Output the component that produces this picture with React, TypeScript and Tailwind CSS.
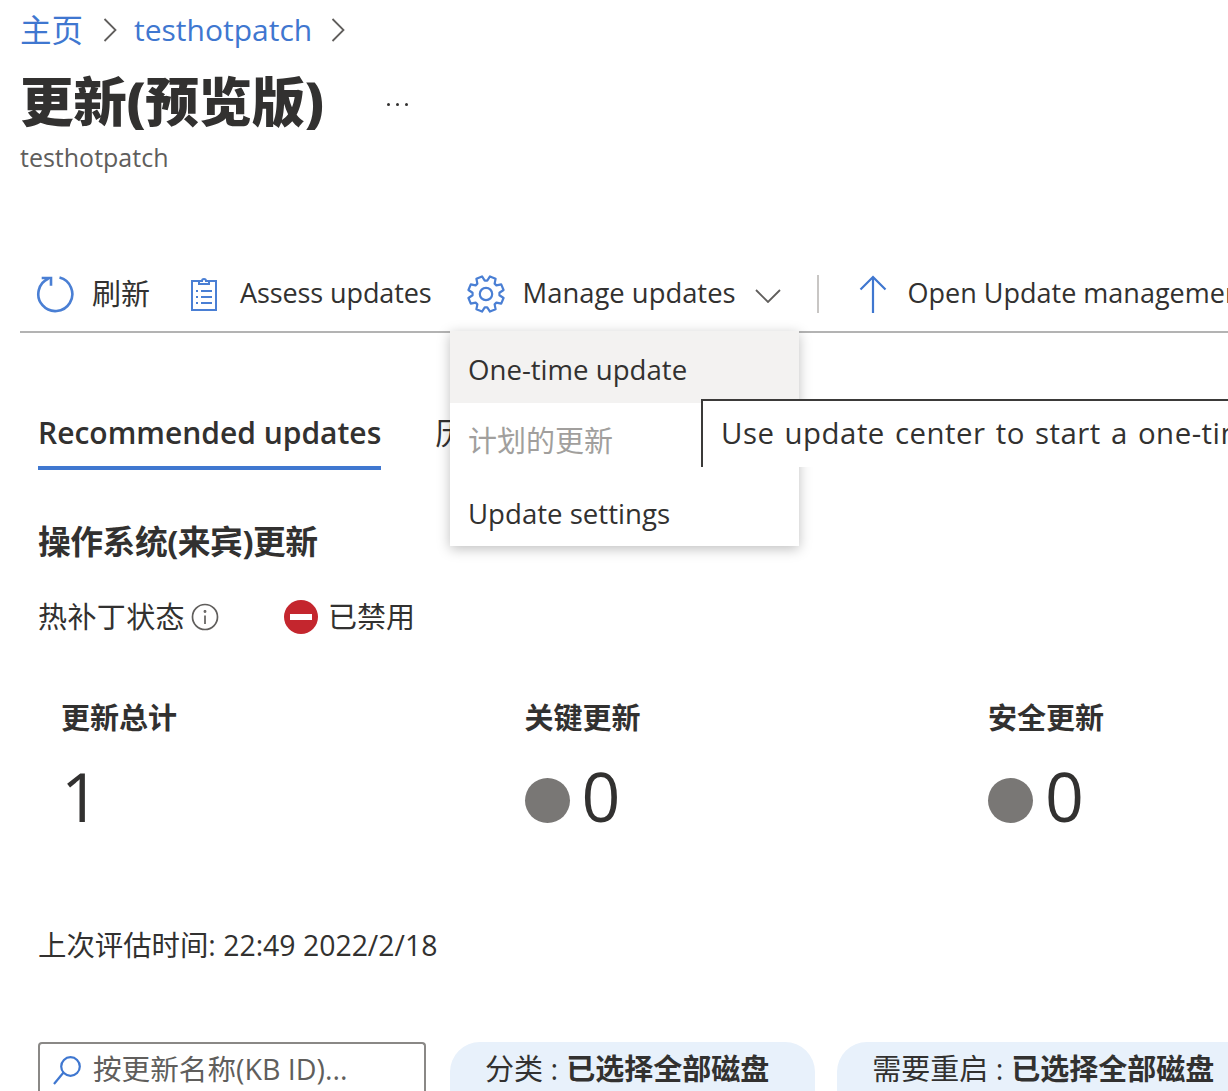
import { Info } from "lucide-react";

const FONT = "[font-family:'Open_Sans','Noto_Sans_CJK_SC',sans-serif]";

// 8 tooth gear outline, teeth sit off the vertical axis like the portal icon
function gearPath(cx: number, cy: number, outer: number, inner: number) {
  const pts: string[] = [];
  for (let i = 0; i < 8; i++) {
    const a = ((i * 45 + 22.5 - 90) * Math.PI) / 180;
    const steps: [number, number][] = [
      [inner, -0.3],
      [outer, -0.17],
      [outer, 0.17],
      [inner, 0.3],
    ];
    for (const [r, d] of steps) {
      pts.push(`${(cx + r * Math.cos(a + d)).toFixed(2)} ${(cy + r * Math.sin(a + d)).toFixed(2)}`);
    }
  }
  return `M${pts.join("L")}Z`;
}

function Chevron({ className }: { className: string }) {
  return (
    <svg viewBox="0 0 14 26" className={className} fill="none" stroke="#605e5c" strokeWidth="1.8">
      <path d="M1.5 2L12.5 13L1.5 24" />
    </svg>
  );
}

function Stat({ title, value, dot }: { title: string; value: string; dot?: boolean }) {
  return (
    <div className="w-[463.5px] shrink-0">
      <div className="text-[29px] leading-[38px] font-bold text-[#323130]">{title}</div>
      <div className="mt-[23px] flex items-center h-[72px]">
        {dot && <span className="w-[45px] h-[45px] rounded-full bg-[#797775] mr-[12px] mt-[8px]" />}
        <span className="text-[68px] leading-[72px] text-[#323130]">{value}</span>
      </div>
    </div>
  );
}

function Pill({ label, value }: { label: string; value: string }) {
  return (
    <div className="shrink-0 h-[60px] rounded-t-[30px] bg-[#e8f1fb] pl-[35px] pr-[46px] flex items-start pt-[8px] text-[29px] leading-[38px] text-[#323130] whitespace-nowrap">
      <span>{label} : </span>
      <span className="font-bold ml-[8px]">{value}</span>
    </div>
  );
}

export default function App() {
  return (
    <div className={`${FONT} relative w-[1228px] h-[1091px] overflow-hidden bg-white text-[#323130]`}>
      {/* header */}
      <div className="pl-[20px] pt-[9px]">
        <div className="flex items-center h-[42px] text-[30px] leading-[42px] text-[#3f77d0]">
          <span className="text-[31.5px]">主页</span>
          <Chevron className="w-[14px] h-[26px] ml-[20px] mr-[17px]" />
          <span>testhotpatch</span>
          <Chevron className="w-[14px] h-[26px] ml-[19px]" />
        </div>
        <div className="flex items-center mt-[16px] h-[70px]">
          <h1 className="text-[53.6px] leading-[70px] font-black text-[#323130] tracking-[-0.4px]">更新(预览版)</h1>
          <span className="ml-[63px] flex gap-[6px] mt-[4px]">
            <i className="w-[3px] h-[3px] rounded-full bg-[#323130]" />
            <i className="w-[3px] h-[3px] rounded-full bg-[#323130]" />
            <i className="w-[3px] h-[3px] rounded-full bg-[#323130]" />
          </span>
        </div>
        <div className="text-[25px] leading-[34px] text-[#605e5c] mt-[3px]">testhotpatch</div>
      </div>

      {/* toolbar */}
      <div className="ml-[20px] mt-[89px] h-[70px] border-b-2 border-[#b3b3b3] flex items-center pb-[7px] text-[27px] whitespace-nowrap text-[#323130]">
        <svg viewBox="0 0 40 40" className="w-[40px] h-[40px] ml-[15px] shrink-0" fill="none" stroke="#4a7fd4" strokeWidth="2.6">
          <path d="M24.5 3.6A17 17 0 1 1 13.5 4.5" />
          <path d="M6.7 4H16V11.7" />
        </svg>
        <span className="ml-[17px] text-[29px]">刷新</span>
        <svg viewBox="0 0 28 36" className="w-[28px] h-[36px] ml-[40px] shrink-0" fill="none" stroke="#4a7fd4" strokeWidth="2">
          <path d="M9 5H2v29h24V5h-7" />
          <path d="M9 8V5h3a2 2 0 0 1 4 0h3v3z" />
          <path d="M6 15h2M11 15h11M6 21h2M11 21h11M6 27h2M11 27h11" />
        </svg>
        <span className="ml-[22px] tracking-[-0.1px]">Assess updates</span>
        <svg viewBox="0 0 40 40" className="w-[40px] h-[40px] ml-[34px] shrink-0" fill="none" stroke="#4a7fd4" strokeWidth="2.2" strokeLinejoin="round">
          <path d={gearPath(20, 20, 18, 13.5)} />
          <circle cx="20" cy="20" r="6.2" />
        </svg>
        <span className="ml-[17px] text-[27.4px] leading-[36px] mt-[-2px]">Manage updates</span>
        <svg viewBox="0 0 26 14" className="w-[26px] h-[14px] ml-[19px] mt-[4px] shrink-0" fill="none" stroke="#605e5c" strokeWidth="1.8">
          <path d="M1 1L13 13L25 1" />
        </svg>
        <span className="w-[2px] h-[38px] bg-[#c8c6c4] ml-[36px] shrink-0" />
        <svg viewBox="0 0 28 38" className="w-[28px] h-[38px] ml-[40px] shrink-0" fill="none" stroke="#3f77d0" strokeWidth="2.2">
          <path d="M14 38V2M1.5 14.5L14 2L26.5 14.5" />
        </svg>
        <span className="ml-[21px]">Open Update management</span>
      </div>

      {/* tabs */}
      <div className="ml-[38px] mt-[75px] flex h-[62px] text-[30px] whitespace-nowrap">
        <div className="h-[62px] border-b-4 border-[#3f77d0] font-semibold leading-[50px] text-[#323130]">Recommended updates</div>
        <div className="ml-[54px] leading-[50px]">历史记录</div>
      </div>

      {/* section */}
      <div className="ml-[38px]">
        <div className="mt-[50px] text-[32.8px] leading-[44px] font-bold tracking-[-0.5px]">操作系统(来宾)更新</div>
        <div className="mt-[33px] flex items-center h-[40px] text-[29px]">
          <span className="tracking-[0.4px]">热补丁状态</span>
          <svg viewBox="0 0 28 28" className="w-[28px] h-[28px] ml-[6px] text-[#605e5c] shrink-0" fill="none" stroke="currentColor" strokeWidth="1.7">
            <circle cx="14" cy="14" r="12.5" />
            <path d="M14 12.5V21" />
            <circle cx="14" cy="8.5" r="0.6" />
          </svg>
          <span className="ml-[65px] w-[34px] h-[34px] rounded-full bg-[#c4262e] flex items-center justify-center shrink-0">
            <i className="w-[22px] h-[6px] bg-white" />
          </span>
          <span className="ml-[10px]">已禁用</span>
        </div>

        <div className="mt-[62px] ml-[23px] flex">
          <Stat title="更新总计" value="1" />
          <Stat title="关键更新" value="0" dot />
          <Stat title="安全更新" value="0" dot />
        </div>

        <div className="mt-[93px] text-[28.4px] leading-[40px] text-[#323130]">上次评估时间: 22:49 2022/2/18</div>

        <div className="mt-[77px] flex">
          <div className="w-[388px] h-[60px] shrink-0 border-2 border-b-0 border-[#8a8886] rounded-t-[4px] flex items-start pt-[6px] pl-[12px] text-[28.6px] leading-[38px] text-[#605e5c]">
            <svg viewBox="0 0 30 30" className="w-[30px] h-[30px] mt-[5px] shrink-0" fill="none" stroke="#3f77d0" strokeWidth="2.2">
              <circle cx="18.5" cy="11.5" r="9.3" />
              <path d="M11.5 17.5L2 29" />
            </svg>
            <span className="ml-[11px] whitespace-nowrap">按更新名称(KB ID)...</span>
          </div>
          <div className="ml-[24px]"><Pill label="分类" value="已选择全部磁盘" /></div>
          <div className="ml-[22px]"><Pill label="需要重启" value="已选择全部磁盘" /></div>
        </div>
      </div>

      {/* dropdown menu */}
      <div className="absolute left-[450px] top-[331px] w-[349px] h-[215px] bg-white shadow-[0_3px_12px_rgba(0,0,0,0.25)] text-[27.6px] whitespace-nowrap">
        <div className="h-[72px] bg-[#f3f2f1] pl-[18px] leading-[76px]">One-time update</div>
        <div className="h-[72px] pl-[18px] leading-[76px] text-[#a19f9d] text-[29px]">计划的更新</div>
        <div className="h-[71px] pl-[18px] leading-[76px]">Update settings</div>
      </div>

      {/* tooltip */}
      <div className="absolute left-[701px] top-[399px] w-[600px] h-[68px] bg-white border-t-2 border-l-2 border-[#3b3a39] pl-[18px] text-[29.4px] leading-[64px] whitespace-nowrap tracking-[0.5px] [word-spacing:2px]">
        Use update center to start a one-time update
      </div>
    </div>
  );
}
